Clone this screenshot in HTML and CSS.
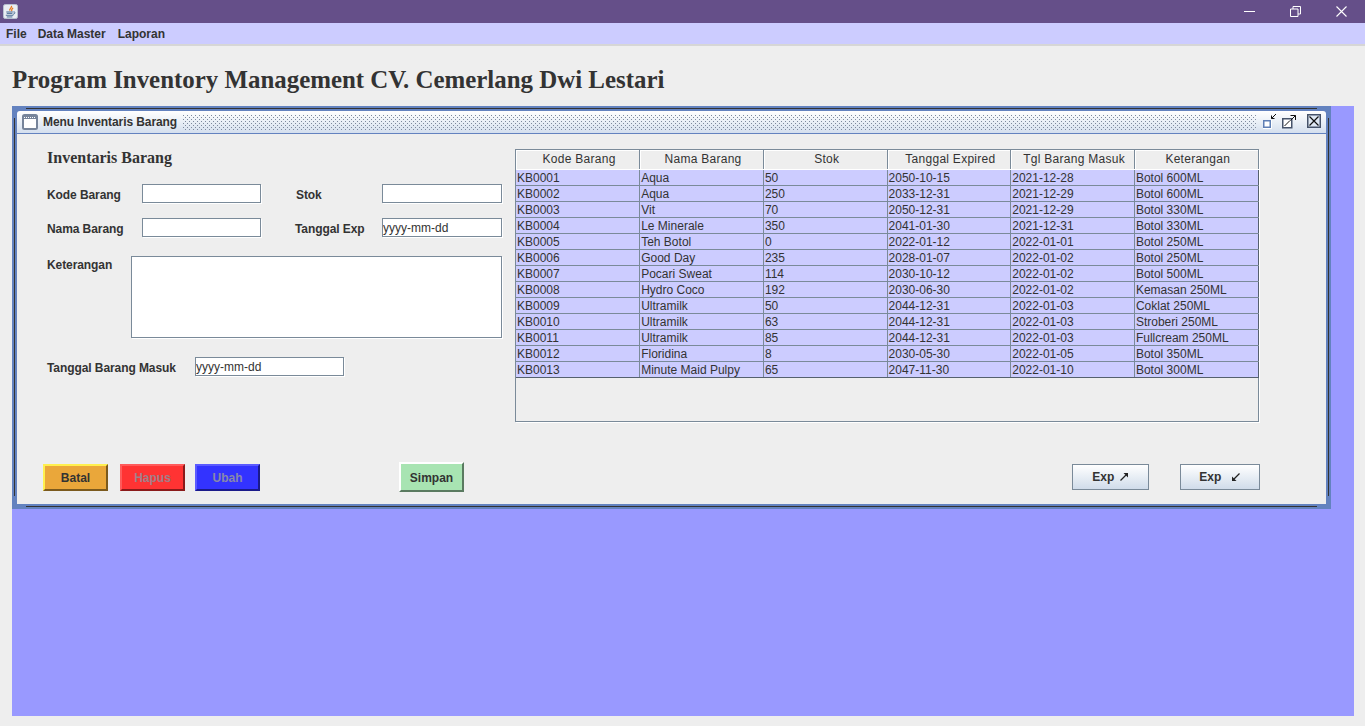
FILE: index.html
```html
<!DOCTYPE html>
<html lang="en">
<head>
    <meta charset="UTF-8">
    <meta name="viewport" content="width=device-width, initial-scale=1.0">
    <title>Program Inventory Management</title>
    <link rel="stylesheet" href="styles.css">
</head>
<body>

    <div class="titlebar">
        <svg class="app-icon" width="15" height="15" viewBox="0 0 16 16">
            <rect x="0.5" y="0.5" width="15" height="15" rx="2" fill="#e9edf3" stroke="#b9c3d2"/>
            <path d="M9 2 C10 4 6 5 7.5 7 M10.5 4 C10 5.5 8.500 6 9.500 7.500" fill="none" stroke="#e8771c" stroke-width="1.400"/>
            <path d="M3.500 8.500 H10.500 M4 10 H10 M3 12 H11 M4 13.800 H10" fill="none" stroke="#41658f" stroke-width="1"/>
            <path d="M11 8.500 C13.500 8 13.500 10.500 10.500 11" fill="none" stroke="#41658f" stroke-width="1"/>
        </svg>
        <div class="win-buttons">
            <svg width="11" height="11" viewBox="0 0 11 11"><path d="M0 5.500 H11" stroke="#fff" stroke-width="1"/></svg>
            <svg width="11" height="11" viewBox="0 0 11 11"><path d="M0.500 3 H8 V10.500 H0.500 Z M3 3 V0.500 H10.500 V8 H8" fill="none" stroke="#fff" stroke-width="1"/></svg>
            <svg width="11" height="11" viewBox="0 0 11 11"><path d="M0.500 0.500 L10.500 10.500 M10.500 0.500 L0.500 10.500" stroke="#fff" stroke-width="1.100"/></svg>
        </div>
    </div>

    <div class="menubar">
        <span>File</span>
        <span>Data Master</span>
        <span class="menu-last">Laporan</span>
    </div>

    <h1 class="app-title">Program Inventory Management CV. Cemerlang Dwi Lestari</h1>

    <div class="desktop">
        <div class="frame">
            <div class="frame-title">
                <svg class="frame-icon" width="16" height="16" viewBox="0 0 16 16">
                    <rect x="1" y="1" width="14" height="14" rx="1.500" fill="#fff" stroke="#76849a" stroke-width="2"/>
                    <path d="M1 3.500 H15" stroke="#76849a" stroke-width="3"/>
                    <path d="M2 3.500 H14" stroke="#fff" stroke-width="1" stroke-dasharray="1 1"/>
                </svg>
                <span class="frame-name">Menu Inventaris Barang</span>
                <svg class="dots" height="16">
                    <defs>
                        <pattern id="dot-grip" width="4" height="4" patternUnits="userSpaceOnUse">
                            <rect x="0" y="0" width="1" height="1" fill="#7d899d"/>
                            <rect x="2" y="2" width="1" height="1" fill="#7d899d"/>
                        </pattern>
                    </defs>
                    <rect width="100%" height="100%" fill="url(#dot-grip)"/>
                </svg>
                <div class="frame-buttons">
                    <svg width="16" height="16" viewBox="0 0 16 16">
                        <rect x="1.750" y="7.750" width="6.500" height="6.500" fill="#fff" stroke="#5f7fb5" stroke-width="1.500"/>
                        <path d="M14 1 L9.500 5.500 M9.500 2.500 V5.500 H12.500" fill="none" stroke="#111" stroke-width="1"/>
                        <path d="M9.500 7 V15.500 H1" fill="none" stroke="#fff" stroke-width="1"/>
                    </svg>
                    <svg class="max-icon" width="16" height="16" viewBox="0 0 16 16">
                        <rect x="1.750" y="5.750" width="9" height="9" fill="#fff" stroke="#46536a" stroke-width="1.500"/>
                        <path d="M3.500 13 L9 7.500 M9.500 2.500 H14.500 V7 M14.500 2.500 L9.500 7.500" fill="none" stroke="#111" stroke-width="1"/>
                    </svg>
                    <svg width="16" height="16" viewBox="0 0 16 16">
                        <rect x="1.750" y="1.750" width="12.500" height="12.500" fill="#dfe8f3" stroke="#46536a" stroke-width="1.500"/>
                        <path d="M3.500 3.500 L12.500 12.500 M12.500 3.500 L3.500 12.500" stroke="#111" stroke-width="1.200"/>
                    </svg>
                </div>
            </div>

            <div class="frame-body">
                <div class="top-area">
                    <form class="form">
                        <h2 class="form-title">Inventaris Barang</h2>
                        <div class="form-row row-first">
                            <label class="lbl lbl-left">Kode Barang</label>
                            <input class="field field-short" type="text">
                            <label class="lbl lbl-mid">Stok</label>
                            <input class="field field-right" type="text">
                        </div>
                        <div class="form-row row-second">
                            <label class="lbl lbl-left">Nama Barang</label>
                            <input class="field field-short" type="text">
                            <label class="lbl lbl-mid lbl-exp">Tanggal Exp</label>
                            <input class="field field-right" type="text" value="yyyy-mm-dd">
                        </div>
                        <div class="form-row row-notes">
                            <label class="lbl lbl-notes">Keterangan</label>
                            <textarea class="field notes"></textarea>
                        </div>
                        <div class="form-row row-date">
                            <label class="lbl lbl-date">Tanggal Barang Masuk</label>
                            <input class="field field-date" type="text" value="yyyy-mm-dd">
                        </div>
                    </form>

                    <div class="table-wrap">
                        <table class="stock-table">
                            <thead>
                                <tr>
                                    <th>Kode Barang</th>
                                    <th>Nama Barang</th>
                                    <th>Stok</th>
                                    <th>Tanggal Expired</th>
                                    <th>Tgl Barang Masuk</th>
                                    <th>Keterangan</th>
                                </tr>
                            </thead>
                            <tbody>
                                <tr><td>KB0001</td><td>Aqua</td><td>50</td><td>2050-10-15</td><td>2021-12-28</td><td>Botol 600ML</td></tr>
                                <tr><td>KB0002</td><td>Aqua</td><td>250</td><td>2033-12-31</td><td>2021-12-29</td><td>Botol 600ML</td></tr>
                                <tr><td>KB0003</td><td>Vit</td><td>70</td><td>2050-12-31</td><td>2021-12-29</td><td>Botol 330ML</td></tr>
                                <tr><td>KB0004</td><td>Le Minerale</td><td>350</td><td>2041-01-30</td><td>2021-12-31</td><td>Botol 330ML</td></tr>
                                <tr><td>KB0005</td><td>Teh Botol</td><td>0</td><td>2022-01-12</td><td>2022-01-01</td><td>Botol 250ML</td></tr>
                                <tr><td>KB0006</td><td>Good Day</td><td>235</td><td>2028-01-07</td><td>2022-01-02</td><td>Botol 250ML</td></tr>
                                <tr><td>KB0007</td><td>Pocari Sweat</td><td>114</td><td>2030-10-12</td><td>2022-01-02</td><td>Botol 500ML</td></tr>
                                <tr><td>KB0008</td><td>Hydro Coco</td><td>192</td><td>2030-06-30</td><td>2022-01-02</td><td>Kemasan 250ML</td></tr>
                                <tr><td>KB0009</td><td>Ultramilk</td><td>50</td><td>2044-12-31</td><td>2022-01-03</td><td>Coklat 250ML</td></tr>
                                <tr><td>KB0010</td><td>Ultramilk</td><td>63</td><td>2044-12-31</td><td>2022-01-03</td><td>Stroberi 250ML</td></tr>
                                <tr><td>KB0011</td><td>Ultramilk</td><td>85</td><td>2044-12-31</td><td>2022-01-03</td><td>Fullcream 250ML</td></tr>
                                <tr><td>KB0012</td><td>Floridina</td><td>8</td><td>2030-05-30</td><td>2022-01-05</td><td>Botol 350ML</td></tr>
                                <tr><td>KB0013</td><td>Minute Maid Pulpy</td><td>65</td><td>2047-11-30</td><td>2022-01-10</td><td>Botol 300ML</td></tr>
                            </tbody>
                        </table>
                    </div>
                </div>

                <div class="actions">
                    <button type="button" class="btn btn-batal">Batal</button>
                    <button type="button" class="btn btn-hapus">Hapus</button>
                    <button type="button" class="btn btn-ubah">Ubah</button>
                    <button type="button" class="btn btn-simpan">Simpan</button>
                    <button type="button" class="btn-exp exp-out">Exp
                        <svg class="arrow" width="10" height="10" viewBox="0 0 10 10">
                            <path d="M1.500 8.500 L7 3" fill="none" stroke="#222" stroke-width="1.300"/>
                            <path d="M4.500 1 H9 V5.500 Z" fill="#222"/>
                        </svg>
                    </button>
                    <button type="button" class="btn-exp exp-in">Exp
                        <svg class="arrow arrow-in" width="10" height="10" viewBox="0 0 10 10">
                            <path d="M8.500 1.500 L3 7" fill="none" stroke="#222" stroke-width="1.300"/>
                            <path d="M1 4.500 V9 H5.500 Z" fill="#222"/>
                        </svg>
                    </button>
                </div>
            </div>
        </div>
    </div>

</body>
</html>
```
FILE: styles.css
```css
* {
    box-sizing: border-box;
}
html, body {
    height: 726px;
    overflow: hidden;
}
body {
    margin: 0;
    background: #eeeeee;
    color: #333333;
    font-family: "Liberation Sans", Arial, sans-serif;
    font-size: 12px;
}

/* window chrome */
.titlebar {
    height: 23px;
    background: #654f89;
    display: flex;
    align-items: center;
    justify-content: space-between;
    padding-left: 3px;
}
.win-buttons {
    display: flex;
    gap: 35px;
    padding-right: 18px;
}
.menubar {
    height: 23px;
    background: #ccccff;
    border-bottom: 2px solid #d6d6d6;
    display: flex;
    gap: 11px;
    padding: 0 6px;
    align-items: center;
    font-weight: bold;
}
.menu-last {
    margin-left: 1px;
}
.app-title {
    margin: 19px 0 0 12px;
    font-family: "Liberation Serif", serif;
    font-size: 24.9px;
    line-height: 30px;
    font-weight: bold;
    color: #333333;
}

/* desktop pane + internal frame */
.desktop {
    position: relative;
    margin: 11px 11px 0 12px;
    height: 610px;
    background: #9999ff;
}
.frame {
    position: absolute;
    left: 0;
    top: 0;
    width: 1319px;
    height: 403px;
    background: #6382bf;
    padding: 5px;
    display: flex;
    flex-direction: column;
}
.frame::before {
    content: "";
    position: absolute;
    left: 14px;
    right: 14px;
    top: 2px;
    bottom: 2px;
    border-top: 1px solid #333;
    border-bottom: 1px solid #333;
    pointer-events: none;
}
.frame::after {
    content: "";
    position: absolute;
    left: 2px;
    right: 2px;
    top: 12px;
    bottom: 13px;
    border-left: 1px solid #333;
    border-right: 1px solid #333;
    pointer-events: none;
}
.frame-title {
    height: 23px;
    display: flex;
    align-items: center;
    padding-left: 5px;
    background: linear-gradient(#ffffff, #d4dfee);
    border-bottom: 1px solid #6382bf;
    border-top-left-radius: 3px;
    border-top-right-radius: 3px;
    flex-shrink: 0;
}
.frame-icon {
    flex-shrink: 0;
    margin-top: -1px;
}
.frame-name {
    margin-left: 5px;
    font-weight: bold;
    letter-spacing: -0.09px;
    white-space: nowrap;
}
.dots {
    flex: 1;
    min-width: 0;
    margin-left: 6px;
    margin-top: 1px;
}
.frame-buttons {
    display: flex;
    gap: 3px;
    padding: 0 4px 0 6px;
    margin-top: -2px;
}
.max-icon {
    margin-right: 6px;
}
.frame-body {
    flex: 1;
    background: #eeeeee;
    min-height: 0;
}
.top-area {
    display: flex;
    height: 317px;
    padding-top: 15px;
}

/* form */
.form {
    width: 498px;
    padding-left: 30px;
}
.form-title {
    margin: 0;
    font-family: "Liberation Serif", serif;
    font-size: 16px;
    line-height: 18px;
    font-weight: bold;
}
.form-row {
    display: flex;
    align-items: center;
}
.row-first {
    margin-top: 17px;
}
.row-second {
    margin-top: 15px;
}
.row-notes {
    margin-top: 19px;
    align-items: flex-start;
}
.row-date {
    margin-top: 19px;
}
.lbl {
    font-weight: bold;
    white-space: nowrap;
    letter-spacing: -0.08px;
    padding-top: 2px;
}
.lbl-left {
    width: 95px;
}
.lbl-mid {
    width: 121px;
    padding-left: 35px;
}
.lbl-exp {
    padding-left: 34px;
}
.lbl-notes {
    width: 84px;
    padding-top: 2px;
}
.lbl-date {
    width: 148px;
}
.field {
    height: 19px;
    border: 1px solid #7a8a99;
    background: #ffffff;
    box-shadow: 1px 1px 0 #ffffff;
    padding: 0;
    margin: 0;
    font-family: "Liberation Sans", Arial, sans-serif;
    font-size: 12px;
    color: #333333;
    outline: none;
}
.field-short {
    width: 119px;
}
.field-right {
    width: 120px;
}
.field-date {
    width: 149px;
}
.notes {
    width: 371px;
    height: 82px;
    resize: none;
    display: block;
}

/* table */
.table-wrap {
    width: 744px;
    height: 273px;
    border: 1px solid #7a8a99;
    box-shadow: 1px 1px 0 #ffffff;
    background: #eeeeee;
}
.stock-table {
    border-collapse: collapse;
    table-layout: fixed;
    width: 742px;
}
.stock-table th {
    height: 19px;
    padding: 0 0 0 3px;
    width: 123.7px;
    font-weight: normal;
    letter-spacing: 0.27px;
    text-align: center;
    background: #eeeeee;
    border-right: 1px solid #7a8a99;
    border-bottom: 1px solid #ffffff;
    box-shadow: inset 1px 1px 0 #ffffff;
}
.stock-table td {
    height: 16px;
    padding: 1px 1px 0;
    line-height: 14px;
    background: #ccccff;
    border-right: 1px solid #7a8a99;
    border-bottom: 1px solid #7a8a99;
    white-space: nowrap;
    overflow: hidden;
}
.stock-table td:last-child {
    border-right-color: #55606e;
}
.stock-table tr:last-child td {
    border-bottom-color: #55606e;
}

/* buttons */
.actions {
    display: flex;
    align-items: center;
    height: 30px;
    margin-top: 11px;
    padding-left: 26px;
}
.btn, .btn-exp {
    font-family: "Liberation Sans", Arial, sans-serif;
    font-size: 12px;
    font-weight: bold;
    padding: 0;
    margin: 0;
    cursor: pointer;
}
.btn {
    width: 65px;
    height: 27px;
    border-width: 2px;
    border-style: solid;
    margin-right: 12px;
    padding-top: 1px;
}
.btn-batal {
    background: #eaa73a;
    color: #333333;
    border-color: #fff04f #7b5a1d #7b5a1d #fff04f;
}
.btn-hapus {
    background: #ff3333;
    color: #a0808a;
    border-color: #ff5a5a #8a1a1a #8a1a1a #ff5a5a;
    margin-right: 10px;
}
.btn-ubah {
    background: #3333ff;
    color: #8888aa;
    border-color: #5a5aff #1a1a8a #1a1a8a #5a5aff;
    margin-right: 139px;
}
.btn-simpan {
    height: 30px;
    background: #a8e4b2;
    color: #333333;
    border-color: #ffffff #5a7a60 #5a7a60 #ffffff;
    margin-right: 608px;
}
.btn-exp {
    height: 26px;
    border: 1px solid #7a8a99;
    background: linear-gradient(#ffffff, #d0dcea);
    color: #333333;
}
.exp-out {
    width: 77px;
    margin-right: 31px;
}
.exp-in {
    width: 80px;
}
.arrow {
    margin-left: 1px;
    vertical-align: -1px;
}
.arrow-in {
    margin-left: 6px;
}
```
